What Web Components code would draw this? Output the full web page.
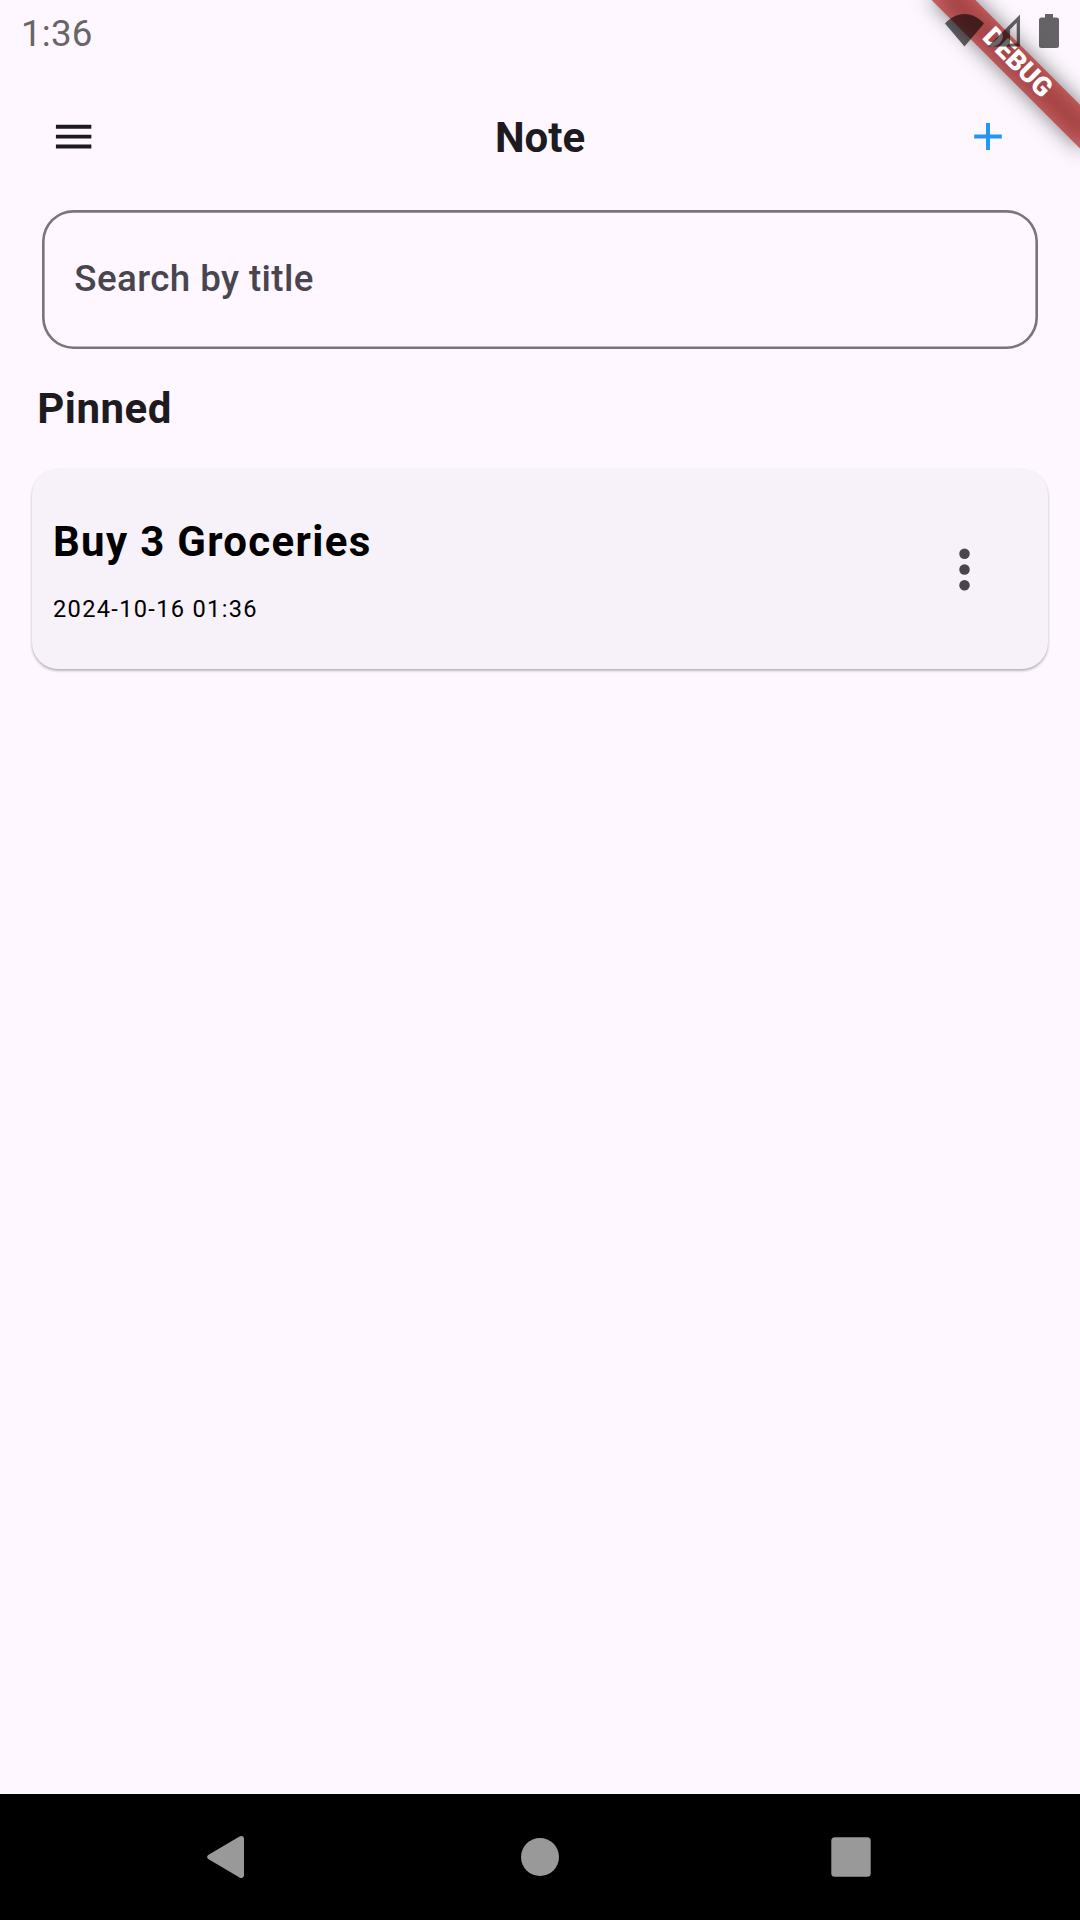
<!DOCTYPE html>
<html lang="en">
<head>
<meta charset="utf-8">
<title>Note</title>
<style>
html,body{margin:0;padding:0;background:#fef7ff}
body{width:1080px;height:1920px;overflow:hidden;font-family:Roboto,"Noto Sans",sans-serif}
</style>
</head>
<body>
<note-app></note-app>
<script>
const define = (name, html) => customElements.define(name, class extends HTMLElement {
  constructor() {
    super();
    this.attachShadow({ mode: 'open' }).innerHTML = html;
  }
});

define('status-bar', `
<style>
:host{display:flex;justify-content:space-between;height:63px;box-sizing:border-box;padding:0 21px;position:relative;z-index:3;color:rgba(0,0,0,.6)}
.time{font-size:36.75px;line-height:43px;padding-top:12px;letter-spacing:.2px;color:#666}
.icons{display:flex;align-items:flex-start;gap:4px;padding-top:14px}
svg{display:block;fill:currentColor}
.battery{margin-left:15px}
</style>
<span class="time"><slot></slot></span>
<div class="icons">
<svg width="39" height="33" viewBox="0 0 39 33"><path d="M19.5 32.5 0 9.500C5 4 12 0 19.500 0S34 4 39 9.500Z"/></svg>
<svg width="32" height="33" viewBox="0 0 32 33"><path fill-rule="evenodd" d="M0 32.500 32 .5V32.500ZM22 15.500V29.500H28.700V8.800Z"/></svg>
<svg class="battery" width="20" height="34" viewBox="0 0 20 34"><path d="M6 0H14V3.500H17.500Q20 3.500 20 6V31.500Q20 34 17.500 34H2.500Q0 34 0 31.500V6Q0 3.500 2.500 3.500H6Z"/></svg>
</div>`);

define('debug-banner', `
<style>
:host{display:block;position:absolute;top:0;right:0;width:220px;height:220px;overflow:hidden;z-index:2;pointer-events:none}
.turn{position:absolute;left:220px;top:0;width:0;height:0;transform:rotate(45deg)}
.shadow,.band{position:absolute;left:-105px;top:73.5px;width:210px;height:31.5px}
.shadow{background:rgba(0,0,0,.498);filter:blur(10.4px)}
.band{background:rgba(183,28,28,.627);color:#fff;font-size:26.775px;font-weight:900;line-height:29.5px;text-align:center}
</style>
<div class="turn"><div class="shadow"></div><div class="band"><slot></slot></div></div>`);

define('app-bar', `
<style>
:host{display:grid;grid-template-columns:1fr auto 1fr;align-items:center;height:147px;padding:0 50px;box-sizing:border-box;color:#1d1b20}
.title{font-size:42px;font-weight:700;line-height:50px;padding-top:2px}
svg{display:block}
.add{justify-self:end;margin-right:28px}
</style>
<svg width="47.250" height="47.250" viewBox="0 0 24 24"><path fill="#1d1b20" d="M3 6h18v2H3zM3 11h18v2H3zM3 16h18v2H3z"/></svg>
<span class="title"><slot></slot></span>
<svg class="add" width="28" height="27" viewBox="0 0 28 27"><path fill="#2196f3" d="M.2 11.600H12V-.3H16V11.600H27.800V15.500H16V27.300H12V15.500H.2Z"/></svg>`);

define('search-field', `
<style>
:host{display:flex;align-items:center;height:139px;margin:0 42px;box-sizing:border-box;padding:0 32.300px 2px;border-radius:31.5px;box-shadow:inset 0 0 0 2.625px #79747e;color:#49454f;font-size:36.75px;font-weight:500;letter-spacing:.394px;line-height:43px}
</style>
<span><slot></slot></span>`);

define('section-title', `
<style>
:host{display:block;margin:35px 37.200px 0;font-size:42px;font-weight:700;letter-spacing:.52px;line-height:50px;color:#1d1b20}
</style>
<slot></slot>`);

define('note-card', `
<style>
:host{display:flex;align-items:center;justify-content:space-between;height:200px;margin:35px 32px 0;box-sizing:border-box;padding:0 78px 0 21px;border-radius:26.250px;background:#f7f1f9;box-shadow:0 2px 2.500px rgba(0,0,0,.22),0 1px 3px rgba(0,0,0,.1);color:#000;letter-spacing:1.3125px}
.text{display:flex;flex-direction:column;gap:28px;padding-top:2px}
.name{font-size:42px;font-weight:700;line-height:50px}
.date{font-size:23.625px;line-height:28px}
svg{display:block}
</style>
<div class="text"><span class="name"><slot></slot></span><span class="date"><slot name="date"></slot></span></div>
<svg width="11" height="43" viewBox="0 0 11 43" fill="#49454f"><circle cx="5.500" cy="5.750" r="5.250"/><circle cx="5.500" cy="21.500" r="5.250"/><circle cx="5.500" cy="37.250" r="5.250"/></svg>`);

define('nav-bar', `
<style>
:host{display:flex;align-items:center;justify-content:space-between;height:126px;margin-top:auto;padding:0 209px 0 207px;background:#000}
svg{display:block;fill:#999}
.home{margin-left:3px}
</style>
<svg width="38" height="42" viewBox="0 0 38 42"><path d="M32.500 .6Q34 -.3 35.500 .3Q37 1 37 2.800V39.200Q37 41 35.500 41.700Q34 42.300 32.500 41.400L1.200 22.900Q-1 21 1.200 19.100Z"/></svg>
<svg class="home" width="38" height="38" viewBox="0 0 38 38"><circle cx="19" cy="19" r="19"/></svg>
<svg width="40" height="40" viewBox="0 0 40 40"><rect x=".3" y=".2" width="39.400" height="39.600" rx="3.500"/></svg>`);

define('note-app', `
<style>
:host{display:flex;flex-direction:column;position:relative;width:1080px;height:1920px;overflow:hidden;background:#fef7ff}
</style>
<status-bar>1:36</status-bar>
<app-bar>Note</app-bar>
<search-field>Search by title</search-field>
<section-title>Pinned</section-title>
<note-card>Buy 3 Groceries<span slot="date">2024-10-16 01:36</span></note-card>
<nav-bar></nav-bar>
<debug-banner>DEBUG</debug-banner>`);
</script>
</body>
</html>
